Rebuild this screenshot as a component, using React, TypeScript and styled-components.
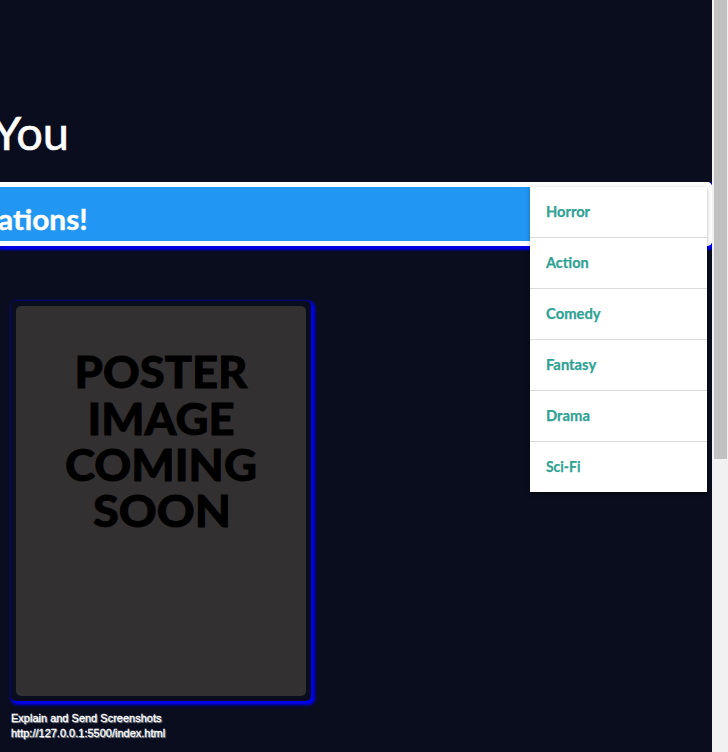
import React from "react";
import styled, { createGlobalStyle } from "styled-components";

const GlobalStyle = createGlobalStyle`
  * { box-sizing: border-box; }
  html, body { margin: 0; background: #0a0d1e; overflow: hidden; }
`;

const Page = styled.div`
  display: flex;
  width: 728px;
  height: 752px;
  overflow: hidden;
  font-family: Lato, "Open Sans", sans-serif;
`;

const Content = styled.main`
  display: flex;
  flex-direction: column;
  width: 712px;
  flex: none;
  overflow: hidden;
`;

const Heading = styled.h1`
  margin: 0;
  height: 182px;
  padding-top: 103px;
  font-size: 47px;
  line-height: 58px;
  font-weight: 400;
  color: #fff;
  -webkit-text-stroke: 0.6px #fff;
`;

const Fit = styled.span<{ $stretch?: number; $shift?: number }>`
  display: inline-block;
  white-space: nowrap;
  transform-origin: left;
  margin-left: ${(p) => p.$shift ?? 0}px;
  transform: scaleX(${(p) => p.$stretch ?? 1});
`;

const Banner = styled.nav`
  height: 64px;
  flex: none;
  border: 5px solid #fff;
  border-left: 0;
  border-radius: 0 5px 5px 0;
  background: #2196f3;
  box-shadow: 2px 2px 2px 2px #0000e6;
  clip-path: inset(0 0 -6px 0);
`;

const BannerTitle = styled.h2`
  margin: 0;
  padding-top: 14px;
  font-size: 29px;
  line-height: 35px;
  font-weight: 700;
  color: #fff;
  -webkit-text-stroke: 0.4px #fff;
`;

const MenuAnchor = styled.div`
  position: relative;
  height: 0;
`;

const Menu = styled.ul`
  position: absolute;
  right: 5px;
  top: -59px;
  width: 177px;
  margin: 0;
  padding: 0;
  list-style: none;
  background: #fff;
  box-shadow: 0 2px 2px rgba(0, 0, 0, 0.14), 0 3px 1px -2px rgba(0, 0, 0, 0.12), 0 1px 5px rgba(0, 0, 0, 0.2);
`;

const MenuItem = styled.li`
  height: 51px;
  padding: 14px 16px;
  border-bottom: 1px solid #dcdcdc;
  font-size: 14.5px;
  line-height: 22px;
  font-weight: 700;
  color: #2fa294;
  -webkit-text-stroke: 0.25px #2fa294;
  &:last-child { height: 50px; border-bottom: 0; }
`;

const Card = styled.figure`
  width: 300px;
  height: 400px;
  flex: none;
  margin: 55px 0 0 11px;
  padding: 5px;
  border-radius: 5px;
  background: #0a0d1e;
  box-shadow: 2px 2px 3px 1.5px #0000f0;
`;

const Poster = styled.svg`
  display: block;
  width: 290px;
  height: 390px;
  border-radius: 5px;
  background: #333031;
`;

const Caption = styled.footer`
  margin: 10px 0 0 11px;
  font: 11px/15px "Liberation Sans", Arial, sans-serif;
  color: #fff;
  -webkit-text-stroke: 0.3px #fff;
  text-shadow: 1px 1px 1px #aaa;
`;

const CaptionLine = styled.div`
  white-space: nowrap;
`;

const ScrollTrack = styled.aside`
  width: 16px;
  padding: 0 1px 0 2px;
  background: #f1f1f1;
`;

const ScrollThumb = styled.div`
  height: 459px;
  background: #c1c1c1;
`;

const genres = [
  { name: "Horror", stretch: 1.01 },
  { name: "Action", stretch: 1 },
  { name: "Comedy", stretch: 1.02 },
  { name: "Fantasy", stretch: 1.02 },
  { name: "Drama", stretch: 1.02 },
  { name: "Sci-Fi", stretch: 0.96 },
];

const posterLines = [
  { text: "POSTER", x: 58.5, y: 82, width: 173 },
  { text: "IMAGE", x: 71.5, y: 128.5, width: 147 },
  { text: "COMING", x: 49, y: 174.5, width: 192 },
  { text: "SOON", x: 77, y: 221, width: 138 },
];

export default function App() {
  return (
    <>
      <GlobalStyle />
      <Page>
        <Content>
          <Heading><Fit $shift={-8}>You</Fit></Heading>
          <Banner>
            <BannerTitle><Fit $shift={-2} $stretch={1.03}>ations!</Fit></BannerTitle>
          </Banner>
          <MenuAnchor>
            <Menu>
              {genres.map((g) => (
                <MenuItem key={g.name}><Fit $stretch={g.stretch}>{g.name}</Fit></MenuItem>
              ))}
            </Menu>
          </MenuAnchor>
          <Card>
            <Poster viewBox="0 0 290 390">
              {posterLines.map((l) => (
                <text
                  key={l.text}
                  x={l.x}
                  y={l.y}
                  textLength={l.width}
                  lengthAdjust="spacingAndGlyphs"
                  fontFamily="Lato, sans-serif"
                  fontWeight={900}
                  fontSize={44.5}
                  stroke="#000"
                  strokeWidth={0.8}
                >
                  {l.text}
                </text>
              ))}
            </Poster>
          </Card>
          <Caption>
            <CaptionLine>Explain and Send Screenshots</CaptionLine>
            <CaptionLine>http://127.0.0.1:5500/index.html</CaptionLine>
          </Caption>
        </Content>
        <ScrollTrack><ScrollThumb /></ScrollTrack>
      </Page>
    </>
  );
}
